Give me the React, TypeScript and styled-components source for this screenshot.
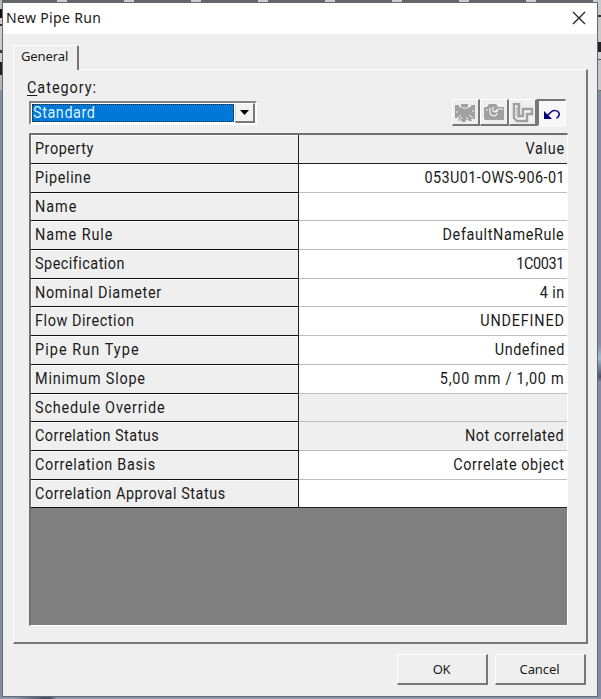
import React from "react";
import styled, { createGlobalStyle } from "styled-components";

const Page = createGlobalStyle`
  * { box-sizing: border-box; }
  body { margin: 0; overflow: hidden; font-family: "Noto Sans", sans-serif; color: #1a1a1a; }
`;

const Desktop = styled.div`
  width: 601px;
  height: 699px;
  padding: 2px 4px 2px 2px;
  background:
    linear-gradient(100deg, #8e98a9 0 14px, #4b5264 44px 50px, #8e98a9 56px) 0 697px / 601px 2px no-repeat,
    linear-gradient(#c9c9c9 0 15px, #333 15px 17px, #c9c9c9 17px 42px, #222 42px 52px, #d0d0d0 52px 59px, #555 59px 60px, #c8c8c8 60px 90px, #666 90px 91px, #8290a2 91px 345px, #a5bcc9 358px, #465266 377px, #8290a2 382px) 597px 0 / 4px 699px no-repeat,
    linear-gradient(#bbb 0 9px, #111 9px 18px, #ccc 18px 24px, #333 24px 26px, #ccc 26px 50px, #333 50px 53px, #ccc 53px 62px, #222 62px 75px, #b5b5b5 75px 90px, #8290a2 90px) 0 0 / 2px 699px no-repeat,
    repeating-linear-gradient(90deg, #666 0 57px, #ccc 57px 67px) 0 0 / 601px 2px no-repeat;
`;

const Window = styled.div`
  width: 596px;
  height: 695px;
  border: 1px solid #626a77;
  background: #efefef;
  display: flex;
  flex-direction: column;
`;

const TitleBar = styled.header`
  height: 31px;
  flex: none;
  background: #fff;
  display: flex;
  align-items: center;
  justify-content: space-between;
  padding: 0 11px 2px 3px;
`;

const Label = styled.span<{ $size?: number; $track?: number }>`
  display: block;
  font-size: ${(p) => p.$size ?? 14}px;
  letter-spacing: ${(p) => p.$track ?? 0}px;
  white-space: pre;
  line-height: 20px;
`;

const GridText = styled(Label)<{ $end?: boolean }>`
  font-family: Roboto, "Liberation Sans", sans-serif;
  font-size: 16px;
  margin-right: ${(p) => -(p.$track ?? 0)}px;
  transform: scaleX(0.9);
  transform-origin: ${(p) => (p.$end ? "right" : "left")} center;
`;

const Body = styled.main`
  padding: 11px 9px 0 10px;
`;

const Tab = styled.div`
  position: relative;
  z-index: 1;
  width: 66px;
  height: 25px;
  margin-bottom: -1px;
  padding: 0 0 0 7px;
  background: #efefef;
  border: solid;
  border-width: 1px 2px 0 1px;
  border-color: #fff #777 #fff #fff;
  border-radius: 2px 2px 0 0;
`;

const TabPanel = styled.section`
  width: 575px;
  height: 575px;
  border: solid;
  border-width: 1px 2px 2px 1px;
  border-color: #fff #777 #777 #fff;
  padding: 8px 0 0 15px;
`;

const Caption = styled.div`
  margin-left: -2px;
`;

const Accel = styled.span`
  text-decoration: underline;
  text-underline-offset: 2px;
  text-decoration-thickness: 1px;
`;

const ControlRow = styled.div`
  display: flex;
  justify-content: space-between;
  align-items: flex-start;
  width: 538px;
  height: 34px;
  margin-top: 1px;
`;

const Combo = styled.div`
  display: flex;
  width: 228px;
  height: 24px;
  margin-top: 2px;
  border: 2px solid;
  border-color: #858585 #fff #fff #858585;
  background: #fff;
`;

const ComboValue = styled.div`
  width: 202px;
  height: 18px;
  margin: 1px 1px 0 1px;
  border: 1px dotted #e8d6a4;
  outline: 1px dotted #222;
  outline-offset: -1px;
  background: #0078d7;
  color: #dff1ff;
  display: flex;
  align-items: center;
`;

const ComboArrow = styled.div`
  width: 20px;
  height: 20px;
  background: #f2f2f2;
  border: solid;
  border-width: 1px 2px 2px 1px;
  border-color: #fff #777 #777 #ddd;
  display: flex;
  align-items: center;
  justify-content: center;
`;

const Toolbar = styled.div`
  display: flex;
  height: 27px;
  margin-right: 1px;
`;

const ToolButton = styled.div<{ $pressed?: boolean }>`
  width: 28.6px;
  height: 27px;
  display: flex;
  align-items: center;
  justify-content: center;
  border: solid;
  border-width: ${(p) => (p.$pressed ? "2px 1px 1px 2px" : "1px 2px 2px 1px")};
  border-color: ${(p) => (p.$pressed ? "#777 #fff #fff #777" : "#fff #777 #777 #fff")};
  background: ${(p) => (p.$pressed ? "#f7f7f9" : "#efefef")};
  padding-top: ${(p) => (p.$pressed ? 2 : 1)}px;
`;

const PropertyGrid = styled.div`
  width: 539px;
  height: 493px;
  border: solid;
  border-width: 2px 1px 1px 2px;
  border-color: #707070 #fff #fff #707070;
  background: #808080;
`;

const Row = styled.div<{ $first?: boolean }>`
  display: grid;
  grid-template-columns: 268px 1fr;
  height: ${(p) => (p.$first ? 29 : 28.7)}px;
`;

const NameCell = styled.div`
  border-right: 1px solid #222;
  border-bottom: 1px solid #111;
  background: #efefef;
  box-shadow: inset 1px 1px #fbfbfb;
  padding: 4px 0 0 3.5px;
`;

const ValueCell = styled.div<{ $tone: "head" | "edit" | "locked"; $last?: boolean }>`
  display: flex;
  justify-content: flex-end;
  background: ${(p) => (p.$tone === "edit" ? "#fff" : "#efefef")};
  border-bottom: 1px solid ${(p) => (p.$tone === "head" || p.$last ? "#222" : "#bdbdbd")};
  padding: 4px 3px 0 0;
`;

const Actions = styled.footer`
  display: flex;
  justify-content: flex-end;
  gap: 7px;
  margin-top: 10px;
  padding-right: 2px;
`;

const Button = styled.div`
  width: 91px;
  height: 31px;
  border: solid;
  border-width: 1px 2px 2px 1px;
  border-color: #fff #777 #777 #fff;
  display: flex;
  align-items: center;
  justify-content: center;
  padding-right: 1px;
`;

type RowData = [string, number, string, number, "head" | "edit" | "locked"];

const rows: RowData[] = [
  ["Property", 0.6, "Value", 0.85, "head"],
  ["Pipeline", 0.75, "053U01-OWS-906-01", 0.45, "edit"],
  ["Name", 1.1, "", 0, "edit"],
  ["Name Rule", 1.05, "DefaultNameRule", 0.7, "edit"],
  ["Specification", 0.55, "1C0031", -0.4, "edit"],
  ["Nominal Diameter", 0.77, "4 in", 0.5, "edit"],
  ["Flow Direction", 0.65, "UNDEFINED", 0.9, "edit"],
  ["Pipe Run Type", 1.2, "Undefined", 0.6, "edit"],
  ["Minimum Slope", 0.9, "5,00 mm / 1,00 m", 0.85, "edit"],
  ["Schedule Override", 0.95, "", 0, "locked"],
  ["Correlation Status", 0.55, "Not correlated", 0.6, "locked"],
  ["Correlation Basis", 0.75, "Correlate object", 0.65, "edit"],
  ["Correlation Approval Status", 0.63, "", 0, "edit"],
];

const ValveIcon = () => (
  <svg width="22" height="20" viewBox="0 0 22 20">
    <path d="M1 2h4v2h2V1h7v3h3V2h4v14h-4l1 2h-3l-2-2-2 3H8l-1-2-3 1 1-3H1z" fill="#a0a0a0" />
    <path d="M7 4l2 1h4l2-1M2 9h2M3 15l4-3M15 12l4 3M8 14l-2 3M12 14l2 2M18 8h2" stroke="#efefef" fill="none" />
  </svg>
);

const CameraIcon = () => (
  <svg width="22" height="20" viewBox="0 0 22 20">
    <path d="M1 5l1-1h2l2-3h7l2 3h6v13H2l-1-2z" fill="#a0a0a0" />
    <path d="M3 7h2M7 5v4c0 5 7 5 7 1M10 4v4l2 1 3-3h5M12 9l3-1" stroke="#f4f4f4" strokeWidth="1.2" fill="none" />
  </svg>
);

const PipeIcon = () => (
  <svg width="22" height="20" viewBox="0 0 22 20">
    <path d="M2 2h5v11h4V6h9v5h-4v7H5l-3-3z" fill="#f4f4f4" />
    <path d="M2 1v14l3 3h10v-7h5V6h-9v7H7V1z" stroke="#a0a0a0" strokeWidth="2.4" fill="none" />
    <path d="M5 4v9l2 2" stroke="#a0a0a0" strokeWidth="1" fill="none" />
  </svg>
);

const UndoIcon = () => (
  <svg width="18" height="14" viewBox="0 0 18 14">
    <path d="M1 4v8h8z" fill="#00007e" />
    <path d="M4 9l4-4c2-2 7-2 8 1 .7 2-.5 4-2.500 5.500" stroke="#00007e" strokeWidth="1.500" fill="none" />
  </svg>
);

export default function App() {
  return (
    <>
      <Page />
      <Desktop>
        <Window>
          <TitleBar>
            <Label $size={14} $track={0.34}>New Pipe Run</Label>
            <svg width="14" height="14" viewBox="0 0 14 14">
              <path d="M1 1l12 12M13 1L1 13" stroke="#222" strokeWidth="1.300" />
            </svg>
          </TitleBar>
          <Body>
            <Tab>
              <Label $size={13} $track={-0.1}>General</Label>
            </Tab>
            <TabPanel>
              <Caption>
                <GridText $track={1.1}>
                  <Accel>C</Accel>ategory:
                </GridText>
              </Caption>
              <ControlRow>
                <Combo>
                  <ComboValue>
                    <GridText $track={0.65}>Standard</GridText>
                  </ComboValue>
                  <ComboArrow>
                    <svg width="9" height="5" viewBox="0 0 9 5">
                      <path d="M0 0h9L4.500 5z" fill="#000" />
                    </svg>
                  </ComboArrow>
                </Combo>
                <Toolbar>
                  <ToolButton><ValveIcon /></ToolButton>
                  <ToolButton><CameraIcon /></ToolButton>
                  <ToolButton><PipeIcon /></ToolButton>
                  <ToolButton $pressed><UndoIcon /></ToolButton>
                </Toolbar>
              </ControlRow>
              <PropertyGrid>
                {rows.map(([name, nameTrack, value, valueTrack, tone], i) => (
                  <Row key={name} $first={i === 0}>
                    <NameCell>
                      <GridText $track={nameTrack}>{name}</GridText>
                    </NameCell>
                    <ValueCell $tone={tone} $last={i === rows.length - 1}>
                      <GridText $end $track={valueTrack}>{value}</GridText>
                    </ValueCell>
                  </Row>
                ))}
              </PropertyGrid>
            </TabPanel>
            <Actions>
              <Button><Label $size={13} $track={-0.3}>OK</Label></Button>
              <Button><Label $size={13} $track={-0.1}>Cancel</Label></Button>
            </Actions>
          </Body>
        </Window>
      </Desktop>
    </>
  );
}
